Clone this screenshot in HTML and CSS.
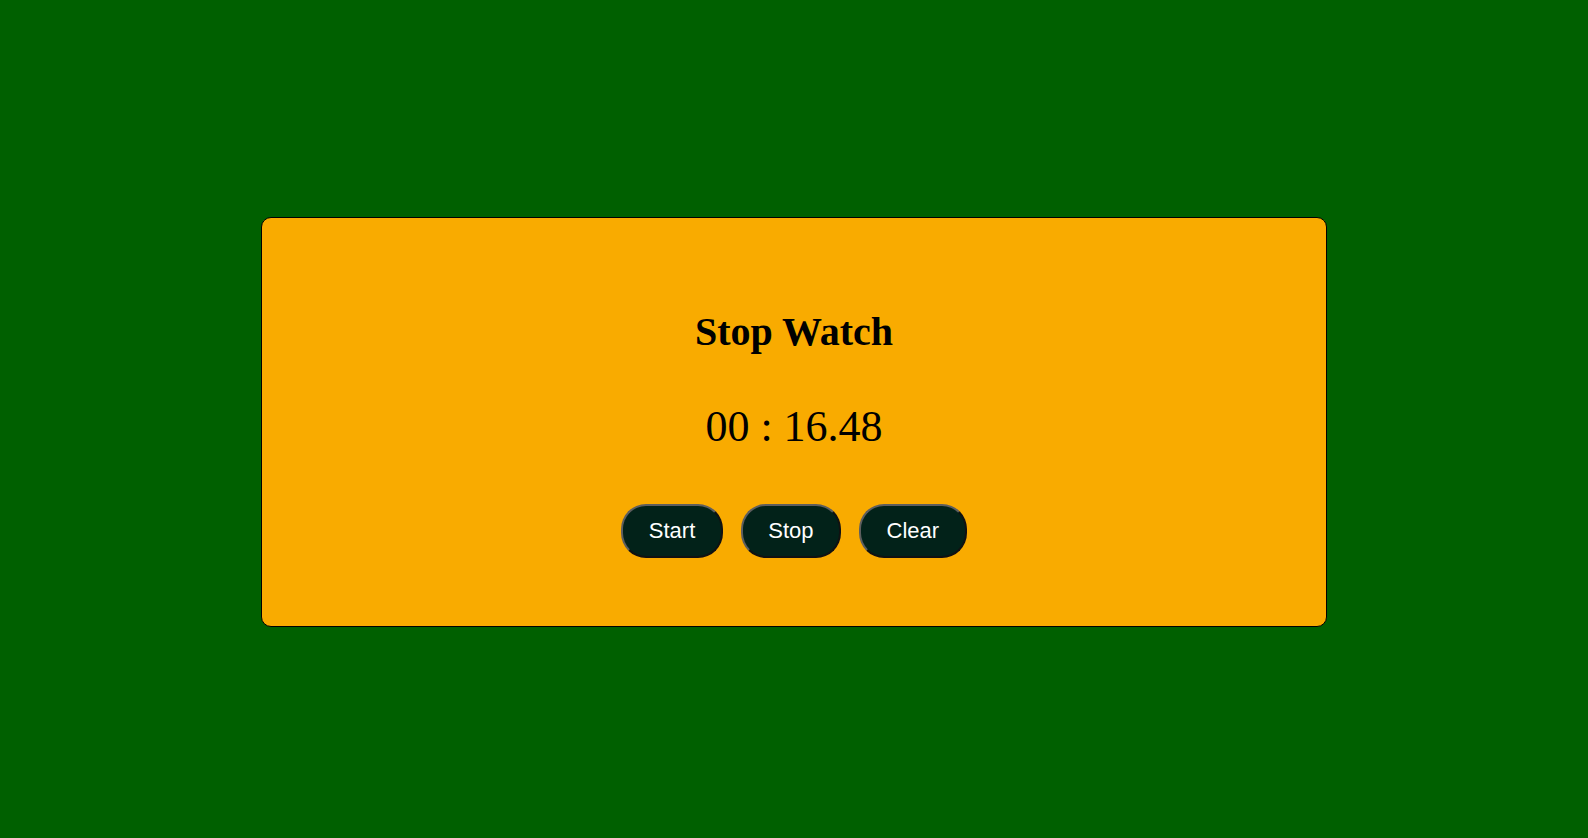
FILE: index.html
```html
<!DOCTYPE html>
<html lang="en">
<head>
<meta charset="utf-8">
<title>Stop Watch</title>
<link rel="stylesheet" href="styles.css">
</head>
<body>
<div class="page">
  <div class="card">
    <h1 class="title">Stop Watch</h1>
    <div class="time">00 : 16.48</div>
    <div class="buttons">
      <button class="btn">Start</button>
      <button class="btn">Stop</button>
      <button class="btn">Clear</button>
    </div>
  </div>
</div>
</body>
</html>
```
FILE: styles.css
```css
html, body {
  margin: 0;
  padding: 0;
  background: #006000;
}
.page {
  min-height: 100vh;
  box-sizing: border-box;
  padding-top: 6px;
  display: flex;
  align-items: center;
  justify-content: center;
}
.card {
  width: 67%;
  background: #f9ab00;
  border: 1px solid #000;
  border-radius: 10px;
  padding: 90px 0 68px;
  display: flex;
  flex-direction: column;
  align-items: center;
  font-family: "Liberation Serif", "Times New Roman", serif;
  color: #000;
}
.title {
  margin: 0;
  font-size: 40px;
  font-weight: bold;
  line-height: normal;
}
.time {
  margin-top: 46px;
  font-size: 44px;
  line-height: normal;
}
.buttons {
  margin-top: 52px;
  display: flex;
  gap: 18px;
}
.btn {
  font-family: "Liberation Sans", Arial, sans-serif;
  font-size: 22px;
  line-height: normal;
  color: #fff;
  background: #022219;
  padding: 12px 25.5px;
  border: 2px solid;
  border-color: #5e5e5e #111 #111 #5e5e5e;
  border-radius: 25px;
}
```
